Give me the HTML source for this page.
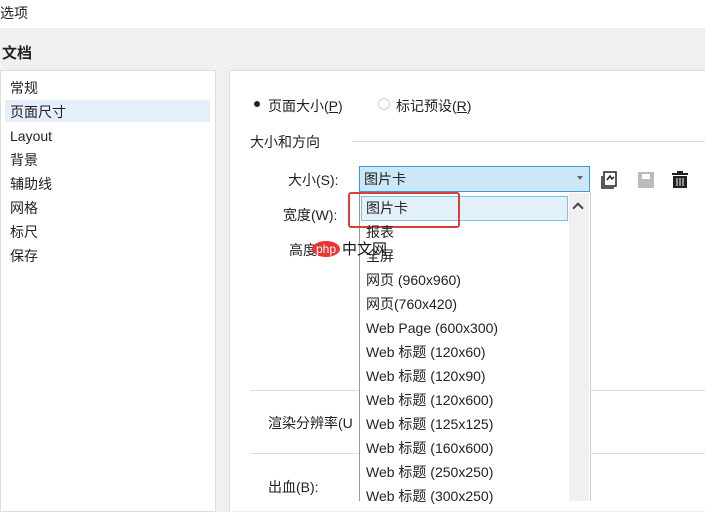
<!DOCTYPE html>
<html><head><meta charset="utf-8"><style>
body{margin:0;width:705px;height:501px;overflow:hidden;background:#f0f0f0;font-family:"Liberation Sans","Noto Sans CJK SC",sans-serif;font-size:14px;color:#222;position:relative}
.a{position:absolute;white-space:nowrap}
</style></head><body>
<div class="a" style="left:0;top:0;width:705px;height:28px;background:#fff"></div>
<div class="a" style="left:0;top:3px">选项</div>
<div class="a" style="left:2px;top:42px;font-weight:bold;font-size:15px">文档</div>
<div class="a" style="left:0;top:70px;width:214px;height:440px;background:#fff;border:1px solid #ddd"></div>
<div class="a" style="left:5px;top:100px;width:205px;height:22px;background:#e5eefb"></div>
<div class="a" style="left:10px;top:76px;line-height:24px">常规<br>页面尺寸<br>Layout<br>背景<br>辅助线<br>网格<br>标尺<br>保存</div>
<div class="a" style="left:229px;top:70px;width:476px;height:440px;background:#fff;border-left:1px solid #ddd;border-top:1px solid #ddd"></div>
<div class="a" style="left:254px;top:101px;width:6px;height:6px;border-radius:50%;background:#222"></div>
<div class="a" style="left:268px;top:96px">页面大小(<u>P</u>)</div>
<div class="a" style="left:378px;top:98px;width:10px;height:10px;border-radius:50%;border:1px solid #ccc"></div>
<div class="a" style="left:396px;top:96px">标记预设(<u>R</u>)</div>
<div class="a" style="left:250px;top:132px">大小和方向</div>
<div class="a" style="left:352px;top:141px;width:353px;height:1px;background:#ddd"></div>
<div class="a" style="left:288px;top:170px">大小(S):</div>
<div class="a" style="left:283px;top:205px">宽度(W):</div>
<div class="a" style="left:289px;top:240px">高度</div>
<div class="a" style="left:250px;top:390px;width:455px;height:1px;background:#ddd"></div>
<div class="a" style="left:250px;top:453px;width:455px;height:1px;background:#ddd"></div>
<div class="a" style="left:268px;top:413px">渲染分辨率(U</div>
<div class="a" style="left:268px;top:477px">出血(B):</div>
<div class="a" style="left:359px;top:166px;width:229px;height:24px;background:#cce8f7;border:1px solid #3c9ad8"></div>
<div class="a" style="left:364px;top:169px">图片卡</div>
<div class="a" style="left:577px;top:176px;border:3px solid transparent;border-top:4px solid #666"></div>
<svg class="a" style="left:600px;top:168px" width="90" height="24">
<rect x="4" y="4" width="12" height="14" fill="#fff" stroke="#222" stroke-width="1.5"/><path d="M7 12l3-4 2 3 2-2" stroke="#222" fill="none" stroke-width="1.5"/><path d="M2 8v12h12" stroke="#222" fill="none" stroke-width="1.5"/>
<rect x="38" y="4" width="16" height="16" fill="#bbb"/><rect x="42" y="6" width="8" height="5" fill="#fff"/>
<rect x="72" y="5" width="16" height="2" fill="#222"/><rect x="77" y="3" width="6" height="2" fill="#222"/><rect x="73" y="8" width="14" height="12" fill="#222"/><path d="M77 10v8M80 10v8M83 10v8" stroke="#fff" stroke-width="1"/>
</svg>
<div class="a" style="left:359px;top:192px;width:230px;height:309px;background:#fff;border-left:1px solid #999;border-right:1px solid #ccc"></div>
<div class="a" style="left:569px;top:193px;width:20px;height:308px;background:#f0f0f0"></div>
<div class="a" style="left:574px;top:204px;width:6px;height:6px;border-left:2px solid #444;border-top:2px solid #444;transform:rotate(45deg)"></div>
<div class="a" style="left:361px;top:196px;width:205px;height:23px;background:#e3f1fa;border:1px solid #7cc1e8"></div>
<div class="a" style="left:348px;top:192px;width:108px;height:32px;border:2.5px solid #d9403a;border-radius:3px"></div>
<div class="a" style="left:366px;top:196px;line-height:24px">图片卡<br>报表<br>全屏<br>网页 (960x960)<br>网页(760x420)<br>Web Page (600x300)<br>Web 标题 (120x60)<br>Web 标题 (120x90)<br>Web 标题 (120x600)<br>Web 标题 (125x125)<br>Web 标题 (160x600)<br>Web 标题 (250x250)<br>Web 标题 (300x250)</div>
<div class="a" style="left:312px;top:241px;width:28px;height:16px;border-radius:50%;background:#e33;color:#fff;font-size:12px;line-height:16px;text-align:center">php</div>
<div class="a" style="left:342px;top:238px;color:#111;font-size:15px">中文网</div>
</body></html>
